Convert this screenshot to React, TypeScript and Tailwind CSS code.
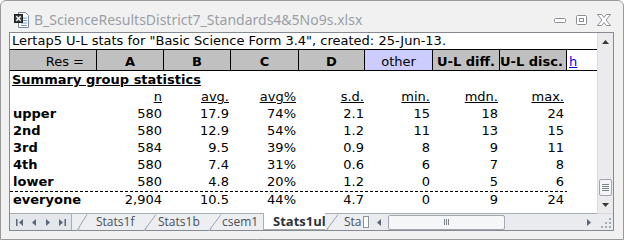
import React from "react";

// column template shared by header and body rows of the sheet
const grid = "grid grid-cols-[87px_67px_67px_68px_66px_68px_67px_67px_1fr]";
const padR = ["pr-[2px]", "pr-[2px]", "pr-[3px]", "pr-[1px]", "pr-[3px]", "pr-[2px]", "pr-[3px]"];

type Row = { label: string; vals: string[] };

const rows: Row[] = [
  { label: "upper", vals: ["580", "17.9", "74%", "2.1", "15", "18", "24"] },
  { label: "2nd", vals: ["580", "12.9", "54%", "1.2", "11", "13", "15"] },
  { label: "3rd", vals: ["584", "9.5", "39%", "0.9", "8", "9", "11"] },
  { label: "4th", vals: ["580", "7.4", "31%", "0.6", "6", "7", "8"] },
  { label: "lower", vals: ["580", "4.8", "20%", "1.2", "0", "5", "6"] },
];
const everyone: Row = { label: "everyone", vals: ["2,904", "10.5", "44%", "4.7", "0", "9", "24"] };
const heads = ["n", "avg.", "avg%", "s.d.", "min.", "mdn.", "max."];

function DataRow({ row, h = "h-[17px] leading-[17px]" }: { row: Row; h?: string }) {
  return (
    <div className={`${grid} ${h}`}>
      <div className="pl-[3px] font-bold">{row.label}</div>
      {row.vals.map((v, i) => (
        <div key={i} className={`text-right ${padR[i]}`}>
          {v}
        </div>
      ))}
      <div />
    </div>
  );
}

function ExcelIcon() {
  return (
    <svg width="15" height="16" viewBox="0 0 15 16">
      <path d="M4.5 0.5h7l3 3v12h-10z" fill="#fff" stroke="#7d8a99" />
      <path d="M7 6h6M7 8.5h6M7 11h6M7 13.5h6" stroke="#6d9ad6" />
      <rect x="0.5" y="2.5" width="8" height="8" fill="#3b3b3b" stroke="#1e1e1e" />
      <path d="M2.3 4.3l4.4 4.4M6.7 4.3l-4.4 4.4" stroke="#fff" strokeWidth="1.3" />
    </svg>
  );
}

function Tri({ dir, bar }: { dir: "l" | "r"; bar?: boolean }) {
  return (
    <svg width={bar ? 7 : 4} height="7" viewBox={bar ? "0 0 7 7" : "0 0 4 7"}>
      {dir === "l" ? (
        <>
          {bar && <rect x="0" y="0" width="1.5" height="7" fill="#5b6778" />}
          <path d={bar ? "M7 0v7L3 3.5z" : "M4 0v7L0 3.5z"} fill="#5b6778" />
        </>
      ) : (
        <>
          <path d="M0 0v7l4-3.5z" fill="#5b6778" />
          {bar && <rect x="5.5" y="0" width="1.5" height="7" fill="#5b6778" />}
        </>
      )}
    </svg>
  );
}

function Slant({ w = 14 }: { w?: number }) {
  return (
    <svg width={w} height="17" viewBox={`0 0 ${w} 17`} className="shrink-0">
      <path d={`M${w - 1} 0.5L1 16.5`} stroke="#9aa3ad" strokeWidth="1" fill="none" />
      <path d={`M1 16.5l3 -2`} stroke="#c4c9cf" fill="none" />
    </svg>
  );
}

export default function App() {
  return (
    <div className="w-[624px] h-[240px] bg-[#f1f1f1] border border-[#9a9a9a] rounded-t-[6px] flex flex-col overflow-hidden font-['DejaVu_Sans',sans-serif] text-[13px] text-black">
      {/* title bar */}
      <div className="h-[31px] shrink-0 flex items-center pt-[6px] pl-[13px] pr-[12px]">
        <ExcelIcon />
        <span className="ml-[5px] font-['Noto_Sans',sans-serif] text-[14px] text-[#9a9ea6] whitespace-nowrap">
          B_ScienceResultsDistrict7_Standards4&amp;5No9s.xlsx
        </span>
        <div className="ml-auto flex items-center gap-[10px]">
          <svg width="12" height="6" viewBox="0 0 12 6" className="mt-[3px]">
            <rect x="0.5" y="0.5" width="11" height="4" rx="1" fill="#fff" stroke="#8a8f97" />
          </svg>
          <svg width="11" height="10" viewBox="0 0 11 10">
            <rect x="0.5" y="0.5" width="10" height="9" rx="1" fill="#fff" stroke="#8a8f97" />
            <rect x="3.5" y="3.5" width="4" height="3" fill="none" stroke="#8a8f97" />
          </svg>
          <svg width="14" height="12" viewBox="0 0 14 12">
            <path
              d="M0.5 0.5h4l2.5 3 2.5-3h4l-4.5 5.5 4.5 5.5h-4l-2.5-3-2.5 3h-4l4.5-5.5z"
              fill="#fff"
              stroke="#8a8f97"
              strokeLinejoin="round"
            />
          </svg>
        </div>
      </div>

      {/* workbook window */}
      <div className="ml-[8px] mr-[9px] mb-[8px] h-[199px] border border-[#858a91] bg-white flex flex-col">
        <div className="flex h-[180px]">
          <div className="w-[587px] h-[180px] overflow-hidden whitespace-nowrap">
            <div className="h-[16px] leading-[16px] pl-[2px]">
              Lertap5 U-L stats for "Basic Science Form 3.4", created: 25-Jun-13.
            </div>
            <div className={`${grid} h-[22px] border-y border-black leading-[16px]`}>
              <div className="bg-[#c0c0c0] border-r border-black text-right pr-[12px] pt-[4px]">Res =</div>
              <div className="bg-[#c0c0c0] border-r border-black text-center font-bold pt-[4px]">A</div>
              <div className="bg-[#c0c0c0] border-r border-black text-center font-bold pt-[4px]">B</div>
              <div className="bg-[#c0c0c0] border-r border-black text-center font-bold pt-[4px]">C</div>
              <div className="bg-[#c0c0c0] border-r border-black text-center font-bold pt-[4px]">D</div>
              <div className="bg-[#ccccff] border-r border-black text-center pt-[4px]">other</div>
              <div className="bg-[#c0c0c0] border-r border-black text-center font-bold pt-[4px]">U-L diff.</div>
              <div className="bg-[#c0c0c0] border-r border-black text-left font-bold pt-[4px] overflow-hidden">U-L disc.</div>
              <div className="pl-[2px] pt-[4px] text-[#0000ff] underline">h</div>
            </div>
            <div className="h-[17px] leading-[17px] pl-[2px] font-bold underline">Summary group statistics</div>
            <div className={`${grid} h-[17px] leading-[17px]`}>
              <div />
              {heads.map((t, i) => (
                <div key={t} className={`text-right ${padR[i]}`}>
                  <span className="underline">{t}</span>
                </div>
              ))}
              <div />
            </div>
            {rows.map((r, i) => (
              <DataRow key={r.label} row={r} h={i === 4 ? "h-[18px] leading-[17px]" : undefined} />
            ))}
            <div className="w-[557px] h-px bg-[repeating-linear-gradient(90deg,#000_0,#000_3px,transparent_3px,transparent_5px)]" />
            <DataRow row={everyone} h="h-[16px] leading-[16px]" />
          </div>

          {/* vertical scrollbar */}
          <div className="w-[16px] h-[180px] border-l border-[#dadce0] bg-[#ebebee] flex flex-col">
            <div className="h-[17px] flex items-center justify-center">
              <svg width="7" height="4" viewBox="0 0 7 4">
                <path d="M0 4h7L3.5 0z" fill="#3a3a3a" />
              </svg>
            </div>
            <div className="flex-1" />
            <div className="h-[17px] mx-[1px] rounded-[2px] border border-[#9ea4ab] bg-[#f4f5f7] flex flex-col items-center justify-center gap-[1px]">
              <div className="w-[7px] h-px bg-[#7c838c]" />
              <div className="w-[7px] h-px bg-[#7c838c]" />
              <div className="w-[7px] h-px bg-[#7c838c]" />
              <div className="w-[7px] h-px bg-[#7c838c]" />
            </div>
            <div className="h-[17px] flex items-center justify-center">
              <svg width="7" height="4" viewBox="0 0 7 4">
                <path d="M0 0h7L3.5 4z" fill="#3a3a3a" />
              </svg>
            </div>
          </div>
        </div>

        {/* sheet tabs + horizontal scrollbar */}
        <div className="flex h-[17px] font-['Open_Sans',sans-serif] text-[12px] leading-[16px] text-[#4a4f57] whitespace-nowrap">
          <div className="w-[62px] border-t border-r border-[#a9aeb5] bg-[#e3e6ea] flex items-center">
            <span className="ml-[6px]"><Tri dir="l" bar /></span>
            <span className="ml-[9px]"><Tri dir="l" /></span>
            <span className="ml-[10px]"><Tri dir="r" /></span>
            <span className="ml-[9px]"><Tri dir="r" bar /></span>
          </div>
          <div className="w-[71px] border-t border-[#a9aeb5] bg-[#eceef1] flex items-center">
            <span className="ml-[4px]"><Slant w={12} /></span>
            <span className="ml-[8px]">Stats1f</span>
          </div>
          <div className="w-[65px] border-t border-[#a9aeb5] bg-[#eceef1] flex items-center">
            <Slant />
            <span className="ml-[1px]">Stats1b</span>
          </div>
          <div className="w-[55px] border-t border-[#a9aeb5] bg-[#eceef1] flex items-center">
            <Slant />
            <span>csem1</span>
          </div>
          <div className="w-[62px] bg-white border-l border-b border-[#a9aeb5] flex items-center">
            <span className="ml-[9px] font-bold text-[13px] text-[#2f3338]">Stats1ul</span>
          </div>
          <div className="w-[38px] border-t border-[#a9aeb5] bg-[#eceef1] flex items-center overflow-hidden">
            <Slant />
            <span className="ml-[5px]">Sta</span>
          </div>
          <div className="w-[7px] border-t border-[#a9aeb5] bg-[#eceef1] flex items-center">
            <div className="w-[6px] h-[12px] border border-[#8c9199] bg-white" />
          </div>
          <div className="w-[227px] border-t border-[#a9aeb5] bg-[#e9ebee] flex items-center">
            <div className="w-[17px] flex justify-center">
              <Tri dir="l" />
            </div>
            <div className="ml-[1px] w-[117px] h-[15px] rounded-[2px] border border-[#a2a8af] bg-[#f5f6f8] flex items-center justify-center gap-[1px]">
              <div className="w-px h-[6px] bg-[#7c838c]" />
              <div className="w-px h-[6px] bg-[#7c838c]" />
              <div className="w-px h-[6px] bg-[#7c838c]" />
            </div>
            <div className="flex-1" />
            <div className="w-[17px] flex justify-center">
              <Tri dir="r" />
            </div>
          </div>
          <div className="w-[16px] border-t border-[#d6d9dd] bg-[#e9ebee] flex items-end justify-end pr-[2px] pb-[2px]">
            <svg width="10" height="10" viewBox="0 0 10 10">
              <rect x="8" y="0" width="2" height="2" fill="#a6acb3" />
              <rect x="4" y="4" width="2" height="2" fill="#a6acb3" />
              <rect x="8" y="4" width="2" height="2" fill="#a6acb3" />
              <rect x="0" y="8" width="2" height="2" fill="#a6acb3" />
              <rect x="4" y="8" width="2" height="2" fill="#a6acb3" />
              <rect x="8" y="8" width="2" height="2" fill="#a6acb3" />
            </svg>
          </div>
        </div>
      </div>
    </div>
  );
}
